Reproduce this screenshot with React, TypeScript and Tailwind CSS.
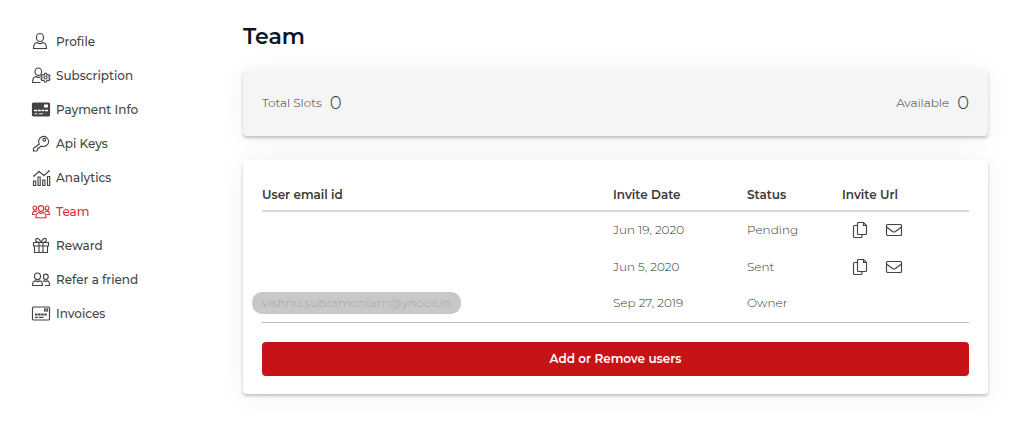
import type { ReactNode } from 'react'
import { clsx } from 'clsx'

type NavItem = {
  label: string
  icon: ReactNode
  active?: boolean
}

type Member = {
  email?: string
  date: string
  status: string
  invite: boolean
}

const navItems: NavItem[] = [
  {
    label: 'Profile',
    icon: (
      <>
        <ellipse cx="8" cy="4.500" rx="3.600" ry="4" />
        <path d="M4.800 9.500C2.700 10 1.500 12 1.500 15.500h13c0-3.500-1.200-5.500-3.300-6-1.800 1.300-4.600 1.300-6.400 0Z" />
      </>
    ),
  },
  {
    label: 'Subscription',
    icon: (
      <>
        <ellipse cx="6.300" cy="4.700" rx="3.300" ry="3.700" />
        <path d="M8.500 15.500H.6C.6 12 1.800 10 3.700 9.500c1.500 1 3.300 1.200 4.800.4" />
        <circle cx="13.500" cy="10.500" r="1.500" />
        <path d="M12.600 6.200h1.800l.3 1.300 1.200.6 1.200-.5.900 1.500-1 1v1l1 1-.9 1.500-1.200-.4-1.200.6-.3 1.200h-1.800l-.3-1.200-1.200-.6-1.200.4-.9-1.500 1-1v-1l-1-1 .9-1.500 1.200.5 1.200-.6Z" />
      </>
    ),
  },
  {
    label: 'Payment Info',
    icon: (
      <>
        <rect x="0.500" y="2" width="17" height="13" rx="1" fill="currentColor" />
        <rect x="12" y="3.500" width="4" height="3" fill="#fff" stroke="none" />
        <path d="M2 9.500h14" stroke="#fff" strokeWidth="1.600" strokeDasharray="3 .7" />
        <path d="M2.500 12.800h3M7 12.800h4" stroke="#fff" strokeWidth="0.900" />
      </>
    ),
  },
  {
    label: 'Api Keys',
    icon: (
      <>
        <path d="M7.300 9A5 5 0 1 1 10 11.200L8.300 11.500 7.500 13H5.800v1.800L4.500 16H1.500v-2.800Z" />
        <circle cx="12.300" cy="4.800" r="1.400" />
      </>
    ),
  },
  {
    label: 'Analytics',
    icon: (
      <>
        <path d="M1.500 16.500v-4.500h2.200v4.500ZM6 16.500V8h2.200v8.500ZM10.700 16.500V11h2.200v5.500ZM15.500 16.500V7.500h2.200v9Z" />
        <path d="m2 7 5-4.500 5 4 5-4.500" />
        <path d="M1.500 7h1M6.700 2.500h.6M11.700 6.500h.6M16.500 2h1" strokeWidth="2.200" />
      </>
    ),
  },
  {
    label: 'Team',
    active: true,
    icon: (
      <>
        <ellipse cx="9" cy="5.600" rx="2.700" ry="3" />
        <path d="M6.600 9.500c-1.700.5-2.600 2-2.600 5.200h10c0-3.200-.9-4.700-2.600-5.200-1.300 1-3.500 1-4.800 0Z" />
        <ellipse cx="2.900" cy="5" rx="1.800" ry="2" />
        <ellipse cx="15.100" cy="5" rx="1.800" ry="2" />
        <path d="M3.500 11.500h-3c0-2 .6-3.200 1.700-3.600 1 .6 2 .6 2.800.1M14.500 11.500h3c0-2-.6-3.200-1.700-3.600-1 .6-2 .6-2.800.1" />
      </>
    ),
  },
  {
    label: 'Reward',
    icon: (
      <>
        <path d="M1.500 5.500h15v3.500h-15ZM2.500 9v6.500h13V9M7 5.500v10M11 5.500v10" />
        <path d="M8.700 5.500C4.500 5.500 3 4 3.800 2.300 4.800.6 8 1.500 8.700 5.500ZM9.300 5.500c4.200 0 5.700-1.500 4.900-3.200-1-1.700-4.200-.8-4.900 3.200Z" />
      </>
    ),
  },
  {
    label: 'Refer a friend',
    icon: (
      <>
        <ellipse cx="5.500" cy="5.300" rx="3" ry="3.300" />
        <path d="M3.300 9.800C1.500 10.200.5 11.700.5 14.500h10c0-2.800-1-4.300-2.800-4.700-1.300.9-3.100.9-4.400 0Z" />
        <ellipse cx="13.800" cy="5.800" rx="2.400" ry="2.700" />
        <path d="M11 10.700c.4-.5.700-.8 1.200-.9 1 .6 2.300.6 3.300 0 1.300.4 2 1.900 2 4.700H13" />
      </>
    ),
  },
  {
    label: 'Invoices',
    icon: (
      <>
        <rect x="0.500" y="2" width="17" height="13" rx="1" />
        <rect x="12.500" y="4" width="3" height="2" />
        <path d="M3 9.500h12" strokeWidth="1.800" strokeDasharray="2.500 .6" />
        <path d="M3 12.300h3M7 12.300h4.500" />
      </>
    ),
  },
]

const members: Member[] = [
  { date: 'Jun 19, 2020', status: 'Pending', invite: true },
  { date: 'Jun 5, 2020', status: 'Sent', invite: true },
  { email: 'vishnu.subramoniam@ynoox.in', date: 'Sep 27, 2019', status: 'Owner', invite: false },
]

const cardShadow = 'shadow-[0_2px_3px_rgba(60,66,100,0.3),0_2px_28px_rgba(0,0,0,0.06)]'

function Icon({ children }: { children: ReactNode }) {
  return (
    <svg
      viewBox="0 0 18 18"
      className="h-[18px] w-[18px] shrink-0 overflow-visible"
      fill="none"
      stroke="currentColor"
      strokeWidth="1.150"
      aria-hidden="true"
    >
      {children}
    </svg>
  )
}

function Sidebar() {
  return (
    <nav className="w-[211px] shrink-0">
      <ul>
        {navItems.map((item) => (
          <li key={item.label}>
            <a
              href="#"
              aria-current={item.active ? 'page' : undefined}
              className={clsx(
                'flex h-[34px] items-center gap-1.5 text-[12px] font-medium',
                item.active ? 'text-[#dc2f38]' : 'text-[#444]'
              )}
            >
              <Icon>{item.icon}</Icon>
              {item.label}
            </a>
          </li>
        ))}
      </ul>
    </nav>
  )
}

function Slots({ label, value }: { label: string; value: number }) {
  return (
    <p className="flex items-center gap-2 text-[12px] font-light">
      {label}
      <span className="text-[18px]">{value}</span>
    </p>
  )
}

function InviteActions() {
  return (
    <div className="flex items-center gap-4 pl-[9px] text-[#444]">
      <button type="button" aria-label="Copy invite url">
        <Icon>
          <path d="M6.500 4.500H3.500Q2.500 4.500 2.500 5.500V15.500Q2.500 16.500 3.500 16.500H10Q11 16.500 11 15.500V13.500" />
          <path d="M7.500 1.500H12.500L15.500 4.500V12.500Q15.500 13.500 14.500 13.500H7.500Q6.500 13.500 6.500 12.500V2.500Q6.500 1.500 7.500 1.500Z" />
          <path d="M12.500 1.500V4.500H15.500" />
        </Icon>
      </button>
      <button type="button" aria-label="Send invite by email">
        <Icon>
          <rect x="1.500" y="3.500" width="15" height="11" rx="1" />
          <path d="M1.500 6 7.500 10.500Q9 11.500 10.500 10.500L16.500 6" />
        </Icon>
      </button>
    </div>
  )
}

function MembersTable() {
  return (
    <table className="w-full table-fixed border-collapse text-left text-[12px]">
      <colgroup>
        <col />
        <col className="w-[134px]" />
        <col className="w-[95px]" />
        <col className="w-[127px]" />
      </colgroup>
      <thead>
        <tr className="h-8 border-b-2 border-[#d9d9d9] text-[#3a3a3a]">
          <th className="font-semibold">User email id</th>
          <th className="font-semibold">Invite Date</th>
          <th className="font-semibold">Status</th>
          <th className="font-semibold">Invite Url</th>
        </tr>
      </thead>
      <tbody className="border-b border-[#bdbdbd] font-light">
        {members.map((member) => (
          <tr key={member.date} className="h-[37px]">
            <td>
              {member.email && (
                <span className="-ml-[10px] inline-flex h-[22px] items-center rounded-[10px] bg-[#c8c8c8] px-[10px] align-middle font-normal text-[#aeaeae]">
                  {member.email}
                </span>
              )}
            </td>
            <td>{member.date}</td>
            <td>{member.status}</td>
            <td>{member.invite && <InviteActions />}</td>
          </tr>
        ))}
      </tbody>
    </table>
  )
}

export default function App() {
  return (
    <div className="flex min-h-screen bg-white pt-[25px] pr-9 pb-[30px] pl-8 font-['Montserrat','Inter',sans-serif] text-[#333]">
      <Sidebar />
      <main className="min-w-0 flex-1">
        <h1 className="text-[22px] leading-6 font-semibold text-[#0b1626]">Team</h1>

        <section
          className={clsx(
            'mt-[21px] flex h-[66px] items-center justify-between rounded bg-[#f5f5f5] px-[19px]',
            cardShadow
          )}
        >
          <Slots label="Total Slots" value={0} />
          <Slots label="Available" value={0} />
        </section>

        <section className={clsx('mt-6 rounded bg-white px-[19px] pt-[19px] pb-[18px]', cardShadow)}>
          <MembersTable />
          <button
            type="button"
            className="mt-[19px] h-[34px] w-full rounded bg-[#c71217] text-[12px] font-semibold text-white"
          >
            Add or Remove users
          </button>
        </section>
      </main>
    </div>
  )
}
